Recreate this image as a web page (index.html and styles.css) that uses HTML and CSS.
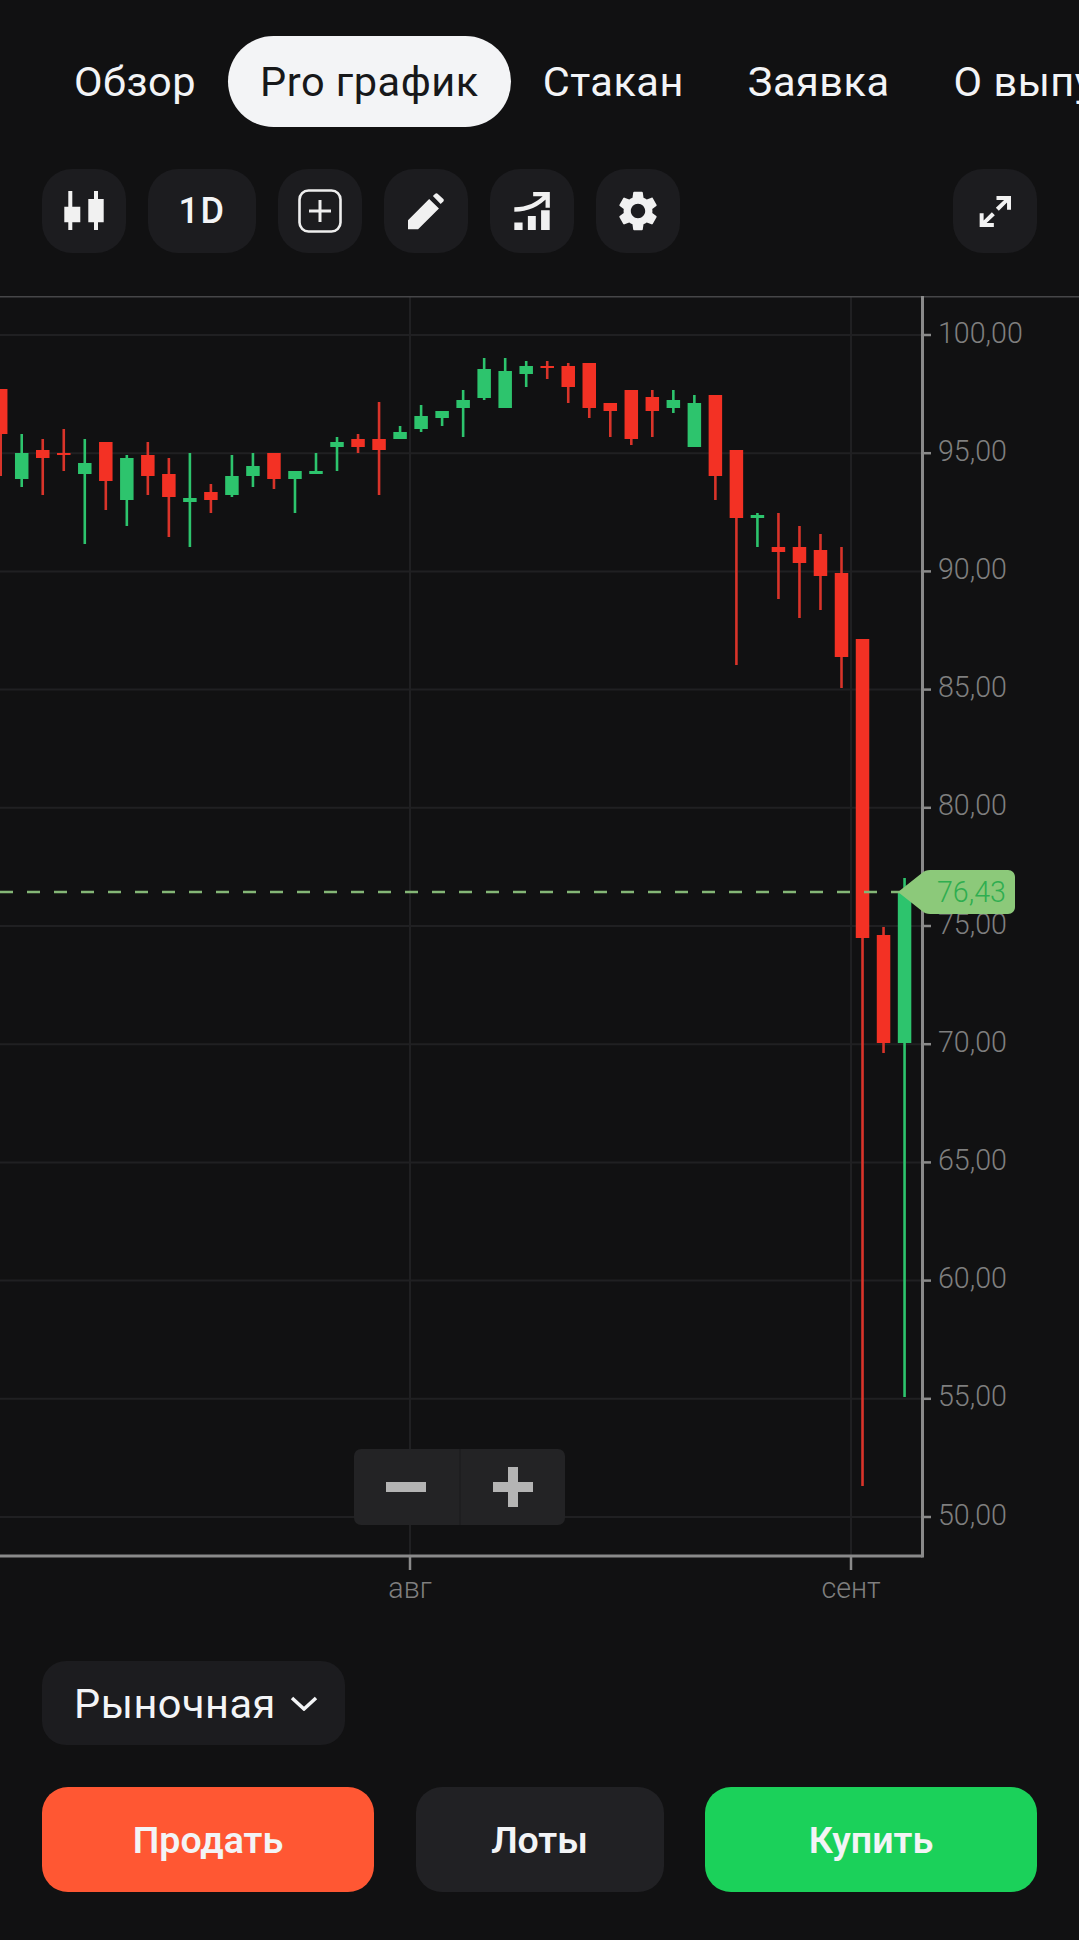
FILE: index.html
```html
<!DOCTYPE html>
<html lang="ru">
<head>
    <meta charset="UTF-8">
    <meta name="viewport" content="width=device-width, initial-scale=1.0">
    <title>Pro график</title>
    <link rel="stylesheet" href="styles.css">
</head>
<body>

<nav class="tabs">
    <a class="tab">Обзор</a>
    <a class="tab active">Pro график</a>
    <a class="tab">Стакан</a>
    <a class="tab">Заявка</a>
    <a class="tab">О выпуске</a>
</nav>

<div class="toolbar">
    <button class="tool">
        <svg class="icon-candles" viewBox="0 0 40 40">
            <path d="M4.3 0h4v15.7h8v15.6h-8V39h-4v-7.7h-4V15.7h4zM30 0h4v8h5.7v23.3H34V39h-4v-7.7h-5.7V8H30z"/>
        </svg>
    </button>
    <button class="tool tool-period">1D</button>
    <button class="tool">
        <svg class="icon-add" viewBox="0 0 44 44">
            <rect x="1.5" y="1.5" width="41" height="41" rx="9"/>
            <path d="M22 11v22M11 22h22"/>
        </svg>
    </button>
    <button class="tool">
        <svg class="icon-pencil" viewBox="115 97 107 110">
            <path d="M115 178l63-63 29 28-62 62h-30zM189 106l7-7c2-2 5-2 7 0l17 16c2 2 2 5 0 7l-8 8z"/>
        </svg>
    </button>
    <button class="tool">
        <svg class="icon-growth" viewBox="433 95 107 115">
            <path d="M433 187h25v23h-25zM474 168h24v42h-24zM514 150h26v60h-26z"/>
            <path class="line" d="M433 148c38 0 70-12 98-43M490 101h44v42"/>
        </svg>
    </button>
    <button class="tool">
        <svg class="icon-gear" viewBox="2.6 2 18.8 20">
            <path d="M19.14 12.94c.04-.3.06-.61.06-.94 0-.32-.02-.64-.07-.94l2.03-1.58c.18-.14.23-.41.12-.61l-1.92-3.32c-.12-.22-.37-.29-.59-.22l-2.39.96c-.5-.38-1.03-.7-1.62-.94l-.36-2.54c-.04-.24-.24-.41-.48-.41h-3.84c-.24 0-.43.17-.47.41l-.36 2.54c-.59.24-1.13.57-1.62.94l-2.39-.96c-.22-.08-.47 0-.59.22L2.74 8.87c-.12.21-.08.47.12.61l2.03 1.58c-.05.3-.09.63-.09.94s.02.64.07.94l-2.03 1.58c-.18.14-.23.41-.12.61l1.92 3.32c.12.22.37.29.59.22l2.39-.96c.5.38 1.03.7 1.62.94l.36 2.54c.05.24.24.41.48.41h3.84c.24 0 .44-.17.47-.41l.36-2.54c.59-.24 1.13-.56 1.62-.94l2.39.96c.22.08.47 0 .59-.22l1.92-3.32c.12-.22.07-.47-.12-.61l-2.01-1.58zM12 15.6c-1.98 0-3.6-1.62-3.6-3.6s1.62-3.6 3.6-3.6 3.6 1.62 3.6 3.6-1.62 3.6-3.6 3.6z"/>
        </svg>
    </button>
    <button class="tool tool-expand">
        <svg class="icon-expand" viewBox="85 84 100 98">
            <path d="M138 86h44v42h-12v-22l-25 25-9-9 25-24h-23zM130 180H87v-42h12v22l25-25 9 9-25 24h22z"/>
        </svg>
    </button>
</div>

<div class="chart">
    <svg id="chartSvg" class="chart-svg" viewBox="0 296 1079 1340">
        <g id="grid"></g>
        <g id="candles"></g>
        <line class="price-line" x1="0" y1="892" x2="900" y2="892"/>
        <path class="price-tag" d="M898 892l24-19c2-2 5-3 8-3h78c4 0 7 3 7 7v30c0 4-3 7-7 7h-78c-3 0-6-1-8-3z"/>
        <text class="price-text" x="937" y="902">76,43</text>
    </svg>
    <div class="zoom">
        <button class="zoom-btn">
            <svg class="zoom-icon" viewBox="0 0 40 40"><path d="M0 15h40v10H0z"/></svg>
        </button>
        <button class="zoom-btn">
            <svg class="zoom-icon" viewBox="0 0 40 40"><path d="M15 0h10v15h15v10H25v15H15V25H0V15h15z"/></svg>
        </button>
    </div>
</div>

<div class="order-type">
    <button class="select">
        Рыночная
        <svg class="chevron" viewBox="0 0 28 15"><path d="M2 2l12 11L26 2"/></svg>
    </button>
</div>

<div class="actions">
    <button class="action sell">Продать</button>
    <button class="action lots">Лоты</button>
    <button class="action buy">Купить</button>
</div>

<script src="chart.js"></script>

</body>
</html>
```
FILE: styles.css
```css
html, body {
    margin: 0;
    height: 1940px;
    overflow: hidden;
}
body {
    background-color: #111112;
    color: #f3f4f6;
    font-family: Roboto, "Noto Sans", sans-serif;
    width: 1079px;
}
button {
    border: none;
    color: inherit;
    font-family: inherit;
    padding: 0;
}
svg {
    display: block;
}

/* tabs */
.tabs {
    display: flex;
    padding: 36px 0 0 42px;
    white-space: nowrap;
}
.tab {
    align-items: center;
    border-radius: 46px;
    display: flex;
    font-size: 41.5px;
    height: 91px;
    letter-spacing: 0.5px;
    padding: 0 32px;
}
.tab.active {
    background-color: #f3f4f6;
    color: #17181a;
}

/* toolbar */
.toolbar {
    display: flex;
    gap: 22px;
    margin-top: 42px;
    padding: 0 42px;
}
.tool {
    align-items: center;
    background-color: #1c1c1f;
    border-radius: 30px;
    display: flex;
    height: 84px;
    justify-content: center;
    width: 84px;
}
.tool svg {
    fill: #f1f1f1;
}
.tool-period {
    font-size: 36px;
    font-weight: 500;
    letter-spacing: 1.5px;
    width: 108px;
}
.tool-expand {
    margin-left: auto;
}
.icon-candles {
    height: 40px;
    width: 40px;
}
.icon-add {
    height: 44px;
    width: 44px;
}
.icon-add rect, .icon-add path {
    fill: none;
    stroke: #eeeeee;
    stroke-width: 2.6;
}
.icon-add path {
    stroke-width: 3;
}
.icon-pencil {
    height: 37px;
    width: 36px;
}
.icon-growth {
    height: 38px;
    width: 36px;
}
.icon-growth .line {
    fill: none;
    stroke: #f1f1f1;
    stroke-width: 13;
}
.icon-gear {
    height: 40px;
    width: 38px;
}
.icon-expand {
    height: 33px;
    width: 33px;
}

/* chart */
.chart {
    height: 1340px;
    margin-top: 43px;
    position: relative;
}
.chart-svg {
    height: 1340px;
    width: 1079px;
}
.top-line {
    stroke: #464648;
    stroke-width: 3;
}
.grid-line {
    stroke: #202022;
    stroke-width: 2;
}
.axis-line {
    stroke: #8a8a8a;
    stroke-width: 3;
}
.axis-tick {
    stroke: #8a8a8a;
    stroke-width: 2.5;
}
.axis-text {
    fill: #7f7f7f;
    font-size: 28.6px;
    font-weight: 300;
}
.axis-text.month {
    text-anchor: middle;
}
.up {
    fill: #2dc46d;
    stroke: #2dc46d;
}
.down {
    fill: #f33124;
    stroke: #d9342a;
}
.price-line {
    stroke: #84b676;
    stroke-dasharray: 13 14;
    stroke-width: 2.6;
}
.price-tag {
    fill: #8cc97a;
}
.price-text {
    fill: #2fae50;
    font-size: 28.6px;
    font-weight: 300;
}

/* zoom buttons over the chart */
.zoom {
    background-color: #232325;
    border-radius: 7px;
    display: flex;
    height: 76px;
    left: 354px;
    position: absolute;
    top: 1153px;
    width: 211px;
}
.zoom-btn {
    align-items: center;
    background: none;
    display: flex;
    flex: 1;
    justify-content: center;
}
.zoom-btn:first-child {
    border-right: 2px solid #1e1e20;
}
.zoom-icon {
    fill: #b4b4b4;
    height: 40px;
    width: 40px;
}

/* order */
.order-type {
    margin-top: 25px;
    padding-left: 42px;
}
.select {
    align-items: center;
    background-color: #1c1c1f;
    border-radius: 24px;
    display: flex;
    font-size: 41.5px;
    gap: 14px;
    height: 84px;
    letter-spacing: 0.5px;
    padding: 0 27px 0 32px;
}
.chevron {
    fill: none;
    height: 15px;
    stroke: #f3f4f6;
    stroke-width: 3.5;
    width: 28px;
}
.actions {
    display: flex;
    justify-content: space-between;
    margin-top: 42px;
    padding: 0 42px;
}
.action {
    border-radius: 26px;
    font-size: 37.5px;
    font-weight: 600;
    height: 105px;
    width: 332px;
}
.sell {
    background-color: #ff5733;
}
.lots {
    background-color: #212124;
    width: 248px;
}
.buy {
    background-color: #1bd15a;
}
```
FILE: chart.js
```js
const SVG_NS = 'http://www.w3.org/2000/svg';
const grid = document.getElementById('grid');
const candlesGroup = document.getElementById('candles');

const AXIS_X = 922.5;
const AXIS_Y = 1556;

function addEl(parent, tag, attrs, text) {
    const el = document.createElementNS(SVG_NS, tag);
    for (const key in attrs) {
        el.setAttribute(key, attrs[key]);
    }
    if (text) el.textContent = text;
    parent.appendChild(el);
    return el;
}

function addLine(cls, x1, y1, x2, y2) {
    addEl(grid, 'line', { class: cls, x1, y1, x2, y2 });
}

// price grid: 100,00 sits at y=335, each 5,00 step is 118.2px
for (let i = 0; i <= 10; i++) {
    const y = 335 + i * 118.2;
    const label = (100 - i * 5) + ',00';
    addLine('grid-line', 0, y, AXIS_X, y);
    addLine('axis-tick', AXIS_X, y, 931, y);
    addEl(grid, 'text', { class: 'axis-text', x: 938, y: y + 7.5 }, label);
}

// month marks
[[410, 'авг'], [851, 'сент']].forEach(function(month) {
    addLine('grid-line', month[0], 296, month[0], AXIS_Y);
    addLine('axis-tick', month[0], AXIS_Y, month[0], 1570);
    addEl(grid, 'text', { class: 'axis-text month', x: month[0], y: 1598 }, month[1]);
});

addLine('top-line', 0, 296, 1079, 296);
addLine('axis-line', AXIS_X, 296, AXIS_X, AXIS_Y + 1.5);
addLine('axis-line', 0, AXIS_Y, AXIS_X, AXIS_Y);

// candles: [direction, wick top, body top, body bottom, wick bottom], page pixels
const candles = [
    ['down', 389, 389, 434, 476],
    ['up', 434, 453, 479, 487],
    ['down', 439, 450, 458, 495],
    ['down', 429, 453, 455, 471],
    ['up', 439, 463, 474, 544],
    ['down', 442, 442, 481, 510],
    ['up', 455, 458, 500, 526],
    ['down', 442, 455, 476, 495],
    ['down', 458, 474, 497, 537],
    ['up', 453, 498, 502, 547],
    ['down', 484, 492, 500, 513],
    ['up', 455, 476, 495, 497],
    ['up', 453, 466, 476, 487],
    ['down', 453, 453, 479, 489],
    ['up', 471, 471, 479, 513],
    ['up', 453, 471, 474, 474],
    ['up', 437, 442, 447, 471],
    ['down', 434, 439, 447, 453],
    ['down', 402, 439, 450, 495],
    ['up', 426, 432, 439, 439],
    ['up', 405, 416, 429, 432],
    ['up', 411, 411, 418, 426],
    ['up', 390, 400, 408, 437],
    ['up', 358, 369, 398, 400],
    ['up', 358, 371, 408, 408],
    ['up', 361, 366, 374, 387],
    ['down', 361, 366, 368, 379],
    ['down', 363, 366, 387, 403],
    ['down', 363, 363, 408, 418],
    ['down', 403, 403, 411, 437],
    ['down', 390, 390, 439, 445],
    ['down', 390, 397, 411, 437],
    ['up', 390, 400, 408, 413],
    ['up', 395, 403, 447, 447],
    ['down', 395, 395, 476, 500],
    ['down', 450, 450, 518, 665],
    ['up', 513, 515, 518, 547],
    ['down', 513, 547, 552, 599],
    ['down', 526, 547, 563, 618],
    ['down', 534, 550, 576, 610],
    ['down', 547, 573, 657, 688],
    ['down', 639, 639, 938, 1486],
    ['down', 927, 935, 1043, 1053],
    ['up', 878, 892, 1043, 1397]
];

candles.forEach(function(c, i) {
    const x = 0.7 + i * 21.02;
    addEl(candlesGroup, 'line', { class: c[0], x1: x, y1: c[1], x2: x, y2: c[4], 'stroke-width': 2.6 });
    addEl(candlesGroup, 'rect', {
        class: c[0],
        x: x - 6.75,
        y: c[2],
        width: 13.5,
        height: c[3] - c[2],
        'stroke-width': 0
    });
});
```
